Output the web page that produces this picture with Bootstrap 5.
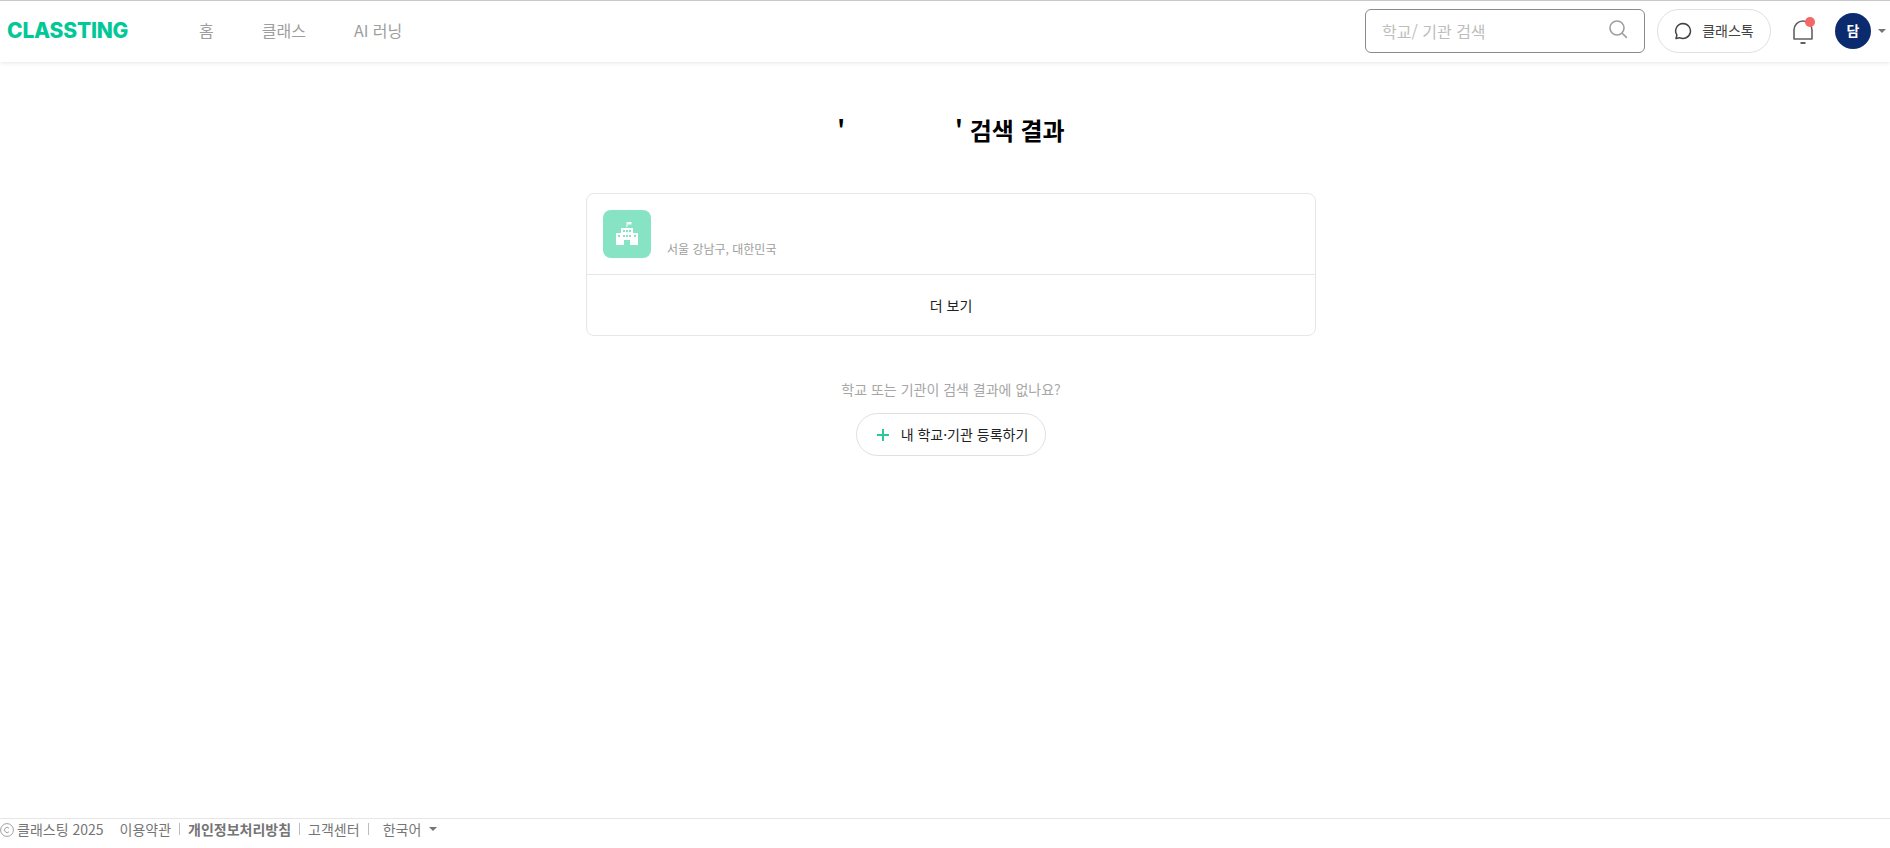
<!DOCTYPE html>
<html lang="ko">
<head>
    <meta charset="UTF-8">
    <meta name="viewport" content="width=device-width, initial-scale=1.0">
    <title>Classting</title>
    <link href="https://cdn.jsdelivr.net/npm/bootstrap@5.3.0/dist/css/bootstrap.min.css" rel="stylesheet">
    <style>
        html, body { height: 100%; }
        body { font-family: "Noto Sans CJK KR", "Noto Sans", sans-serif; background: #fff; overflow: hidden; }
        .page-wrap { height: 848px; }
        .top-bar { height: 62px; border-top: 1px solid #c8c8c8; box-shadow: 0 1px 4px rgba(0,0,0,.1); padding: 0 0 2px 7px; }
        .brand-logo { width: 120px; font-family: "Inter", sans-serif; font-weight: 800; font-size: 21px; color: #00c896; letter-spacing: -.2px; line-height: 1; text-decoration: none; }
        .main-links { margin-left: 72px; margin-bottom: 2px; gap: 48px; }
        .main-links a { color: #9e9e9e; font-size: 16px; text-decoration: none; }
        .search-box { width: 280px; height: 44px; border: 1px solid #8a8a8a; border-radius: 6px; padding: 0 16px; color: #bdbdbd; font-size: 16px; }
        .search-box svg { margin-bottom: 3px; }
        .talk-btn { width: 114px; height: 44px; margin-left: 12px; border: 1px solid #e0e0e0; border-radius: 22px; color: #424242; font-size: 14px; gap: 10px; }
        .bell-wrap { width: 26px; height: 30px; margin-left: 19px; }
        .bell-dot { top: 1px; right: 1px; width: 10px; height: 10px; background: #f56666; border-radius: 50%; }
        .user-avatar { width: 36px; height: 36px; margin-left: 19px; background: #0c2a6e; color: #fff; border-radius: 50%; font-size: 14px; font-weight: 700; }
        .tiny-caret { width: 0; height: 0; border-left: 4px solid transparent; border-right: 4px solid transparent; border-top: 4px solid #757575; }
        .caret-right { margin-left: 7px; margin-right: 4px; }
        .result-area { padding-left: 12px; }
        .result-title { margin-top: 35px; height: 66px; font-size: 24px; font-weight: 700; color: #000; line-height: 66px; }
        .title-gap { display: inline-block; width: 110px; }
        .result-box { width: 730px; height: 143px; margin-top: 30px; border: 1px solid #e6e6e6; border-radius: 8px; }
        .result-row { height: 81px; padding: 16px; gap: 16px; border-bottom: 1px solid #e6e6e6; }
        .school-icon { width: 48px; height: 48px; background: #86e3c4; border-radius: 8px; }
        .school-addr { font-size: 12px; color: #9e9e9e; margin-top: 27px; line-height: 24px; }
        .more-link { height: 60px; font-size: 14px; color: #212121; }
        .ask-text { margin-top: 42px; font-size: 14px; color: #a6a6a6; line-height: 22px; }
        .register-btn { width: 190px; height: 43px; margin-top: 13px; padding-left: 2px; border: 1px solid #e0e0e0; border-radius: 22px; font-size: 14px; color: #212121; gap: 11px; }
        .bottom-bar { height: 30px; border-top: 1px solid #e6e6e6; font-size: 14px; color: #757575; line-height: 20px; }
        .bottom-bar .sep { width: 1px; height: 12px; background: #bdbdbd; margin: 0 8px; }
        .copy-label { margin-left: 3px; }
        .lang-label { margin-left: 6px; }
    </style>
</head>
<body>
    <div class="page-wrap d-flex flex-column">
        <header class="top-bar d-flex align-items-center">
            <a href="#" class="brand-logo">CLASSTING</a>
            <nav class="main-links d-flex">
                <a href="#">홈</a>
                <a href="#">클래스</a>
                <a href="#">AI 러닝</a>
            </nav>
            <div class="ms-auto d-flex align-items-center">
                <div class="search-box d-flex align-items-center justify-content-between">
                    <span>학교/ 기관 검색</span>
                    <svg width="20" height="20" viewBox="0 0 20 20" fill="none" stroke="#9e9e9e" stroke-width="1.6" stroke-linecap="round"><circle cx="9" cy="9" r="7"/><path d="M14.2 14.2l4.2 4.2"/></svg>
                </div>
                <div class="talk-btn d-flex align-items-center justify-content-center">
                    <svg width="18" height="18" viewBox="0 0 18 18" fill="none" stroke="#424242" stroke-width="1.5" stroke-linejoin="round"><path d="M9 1.5a7.5 7.5 0 1 1-3.4 14.2L2 16.5l.9-3.4A7.5 7.5 0 0 1 9 1.5z"/></svg>
                    <span>클래스톡</span>
                </div>
                <div class="bell-wrap position-relative">
                    <svg class="d-block" width="26" height="30" viewBox="0 0 26 30" fill="none" stroke="#616161" stroke-width="1.6" stroke-linejoin="round"><path d="M4 23v-9a9 9 0 0 1 18 0v9z"/><path d="M10.5 27h5" stroke-width="2"/></svg>
                    <span class="bell-dot position-absolute"></span>
                </div>
                <div class="user-avatar d-flex align-items-center justify-content-center">담</div>
                <span class="tiny-caret caret-right"></span>
            </div>
        </header>

        <main class="result-area flex-grow-1 d-flex flex-column align-items-center">
            <h1 class="result-title mb-0"><span>'</span><span class="title-gap"></span><span>' 검색 결과</span></h1>
            <section class="result-box">
                <div class="result-row d-flex">
                    <div class="school-icon d-flex align-items-center justify-content-center">
                        <svg width="26" height="26" viewBox="0 0 26 26" fill="#fff"><path d="M12.5 1h1v5h-1z"/><path d="M13.5 1h4v2.5h-4z"/><path d="M7 7h12v5h5v12h-8v-5h-6v5H2V12h5z"/><g fill="#86e3c4"><path d="M9 9h2v2H9zM12 9h2v2h-2zM15 9h2v2h-2zM4 14h2v2H4zM9 14h2v2H9zM12 14h2v2h-2zM15 14h2v2h-2zM20 14h2v2h-2z"/></g></svg>
                    </div>
                    <div class="school-addr">서울 강남구, 대한민국</div>
                </div>
                <div class="more-link d-flex align-items-center justify-content-center">더 보기</div>
            </section>
            <p class="ask-text mb-0">학교 또는 기관이 검색 결과에 없나요?</p>
            <div class="register-btn d-flex align-items-center justify-content-center">
                <svg width="14" height="14" viewBox="0 0 14 14" stroke="#2cc79b" stroke-width="2"><path d="M7 1v12M1 7h12"/></svg>
                <span>내 학교·기관 등록하기</span>
            </div>
        </main>

        <footer class="bottom-bar d-flex align-items-start">
            <svg class="mt-1" width="14" height="14" viewBox="0 0 14 14" fill="none" stroke="#8a8a8a" stroke-width=".8"><circle cx="7" cy="7" r="6.4"/><path d="M9 5.2a2.6 2.6 0 1 0 0 3.6"/></svg>
            <span class="copy-label">클래스팅 2025</span>
            <span class="ms-3">이용약관</span><span class="sep mt-1"></span>
            <span class="fw-bold">개인정보처리방침</span><span class="sep mt-1"></span>
            <span>고객센터</span><span class="sep mt-1"></span>
            <span class="lang-label">한국어</span>
            <span class="tiny-caret ms-2 mt-2"></span>
        </footer>
    </div>
    <script src="https://cdn.jsdelivr.net/npm/bootstrap@5.3.0/dist/js/bootstrap.bundle.min.js"></script>
</body>
</html>
